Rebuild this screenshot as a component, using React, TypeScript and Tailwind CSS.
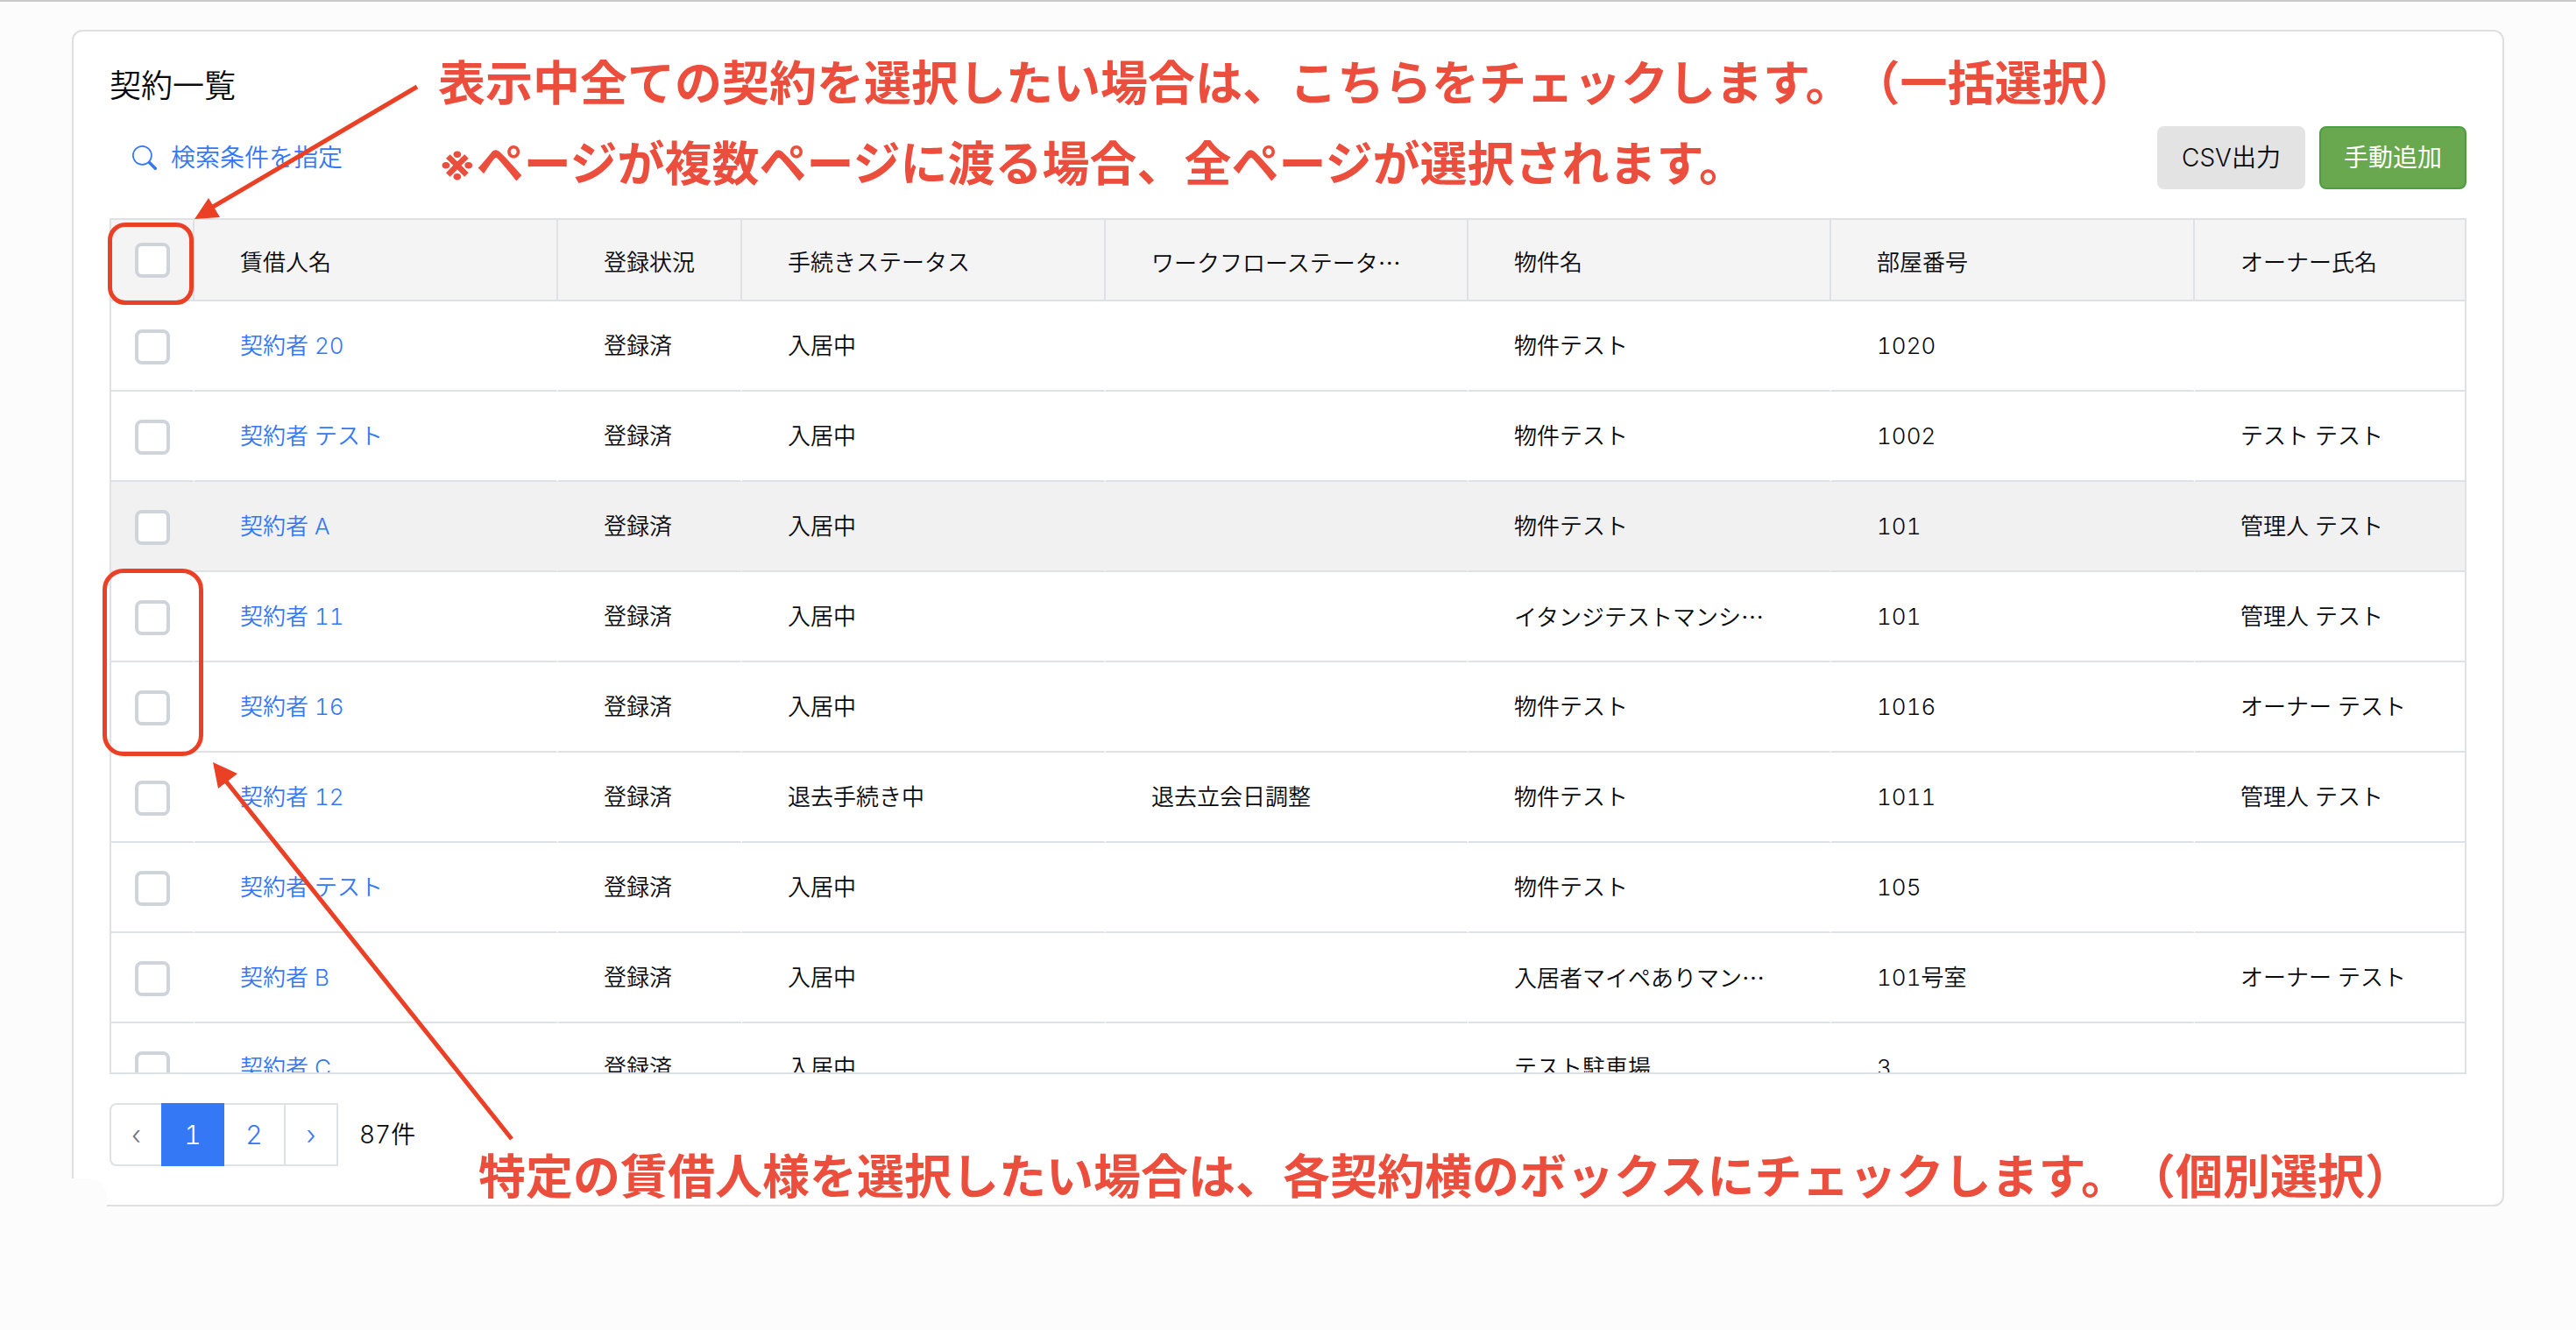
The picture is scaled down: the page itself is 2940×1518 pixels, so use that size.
import { BsSearch } from "react-icons/bs";

type Contract = {
  name: string;
  status: string;
  procedure: string;
  workflow: string;
  property: string;
  room: string;
  owner: string;
  hovered?: boolean;
};

const columns = ["賃借人名", "登録状況", "手続きステータス", "ワークフローステータ…", "物件名", "部屋番号", "オーナー氏名"];

const contracts: Contract[] = [
  { name: "契約者 20", status: "登録済", procedure: "入居中", workflow: "", property: "物件テスト", room: "1020", owner: "" },
  { name: "契約者 テスト", status: "登録済", procedure: "入居中", workflow: "", property: "物件テスト", room: "1002", owner: "テスト テスト" },
  { name: "契約者 A", status: "登録済", procedure: "入居中", workflow: "", property: "物件テスト", room: "101", owner: "管理人 テスト", hovered: true },
  { name: "契約者 11", status: "登録済", procedure: "入居中", workflow: "", property: "イタンジテストマンシ…", room: "101", owner: "管理人 テスト" },
  { name: "契約者 16", status: "登録済", procedure: "入居中", workflow: "", property: "物件テスト", room: "1016", owner: "オーナー テスト" },
  { name: "契約者 12", status: "登録済", procedure: "退去手続き中", workflow: "退去立会日調整", property: "物件テスト", room: "1011", owner: "管理人 テスト" },
  { name: "契約者 テスト", status: "登録済", procedure: "入居中", workflow: "", property: "物件テスト", room: "105", owner: "" },
  { name: "契約者 B", status: "登録済", procedure: "入居中", workflow: "", property: "入居者マイペありマン…", room: "101号室", owner: "オーナー テスト" },
  { name: "契約者 C", status: "登録済", procedure: "入居中", workflow: "", property: "テスト駐車場", room: "3", owner: "" },
];

/** Cell text; a trailing ellipsis is set in the Japanese face so its dots sit mid-line. */
function CellText({ text }: { text: string }) {
  if (!text.endsWith("…")) return <>{text}</>;
  return (
    <>
      {text.slice(0, -1)}
      <span className="font-['Noto_Sans_CJK_JP',sans-serif]">…</span>
    </>
  );
}

function Checkbox({ label }: { label: string }) {
  return (
    <input
      type="checkbox"
      aria-label={label}
      className="block size-10 appearance-none rounded-lg border-4 border-[#ced4da] bg-white checked:bg-[#3478f6]"
    />
  );
}

function ContractTable() {
  return (
    <div className="mt-[33px] h-[977px] overflow-x-hidden overflow-y-auto border-2 border-[#dee2e6] [scrollbar-width:none]">
      <table className="w-full table-fixed border-separate border-spacing-0 text-left text-[26px] leading-10">
        <colgroup>
          <col className="w-[95px]" />
          <col className="w-[415px]" />
          <col className="w-[210px]" />
          <col className="w-[415px]" />
          <col className="w-[414px]" />
          <col className="w-[414px]" />
          <col className="w-[415px]" />
          <col />
        </colgroup>
        <thead>
          <tr className="h-[93px] bg-[#f4f4f4]">
            <th className="border-r-2 border-b-2 border-[#dee2e6] pl-[27px]">
              <Checkbox label="全ての契約を選択" />
            </th>
            {columns.map((c) => (
              <th
                key={c}
                className="overflow-hidden border-r-2 border-b-2 border-[#dee2e6] pt-[6px] pl-[52px] font-[350] whitespace-nowrap last:border-r-0"
              >
                <CellText text={c} />
              </th>
            ))}
          </tr>
        </thead>
        <tbody>
          {contracts.map((c, i) => (
            <tr key={i} className={c.hovered ? "h-[103px] bg-[#f1f1f1]" : "h-[103px]"}>
              <td className="border-r-2 border-b-2 border-r-transparent border-b-[#dee2e6] pt-[3px] pl-[27px]">
                <Checkbox label={c.name + "を選択"} />
              </td>
              {[c.name, c.status, c.procedure, c.workflow, c.property, c.room, c.owner].map((text, j) => (
                <td
                  key={j}
                  className="overflow-hidden border-r-2 border-b-2 border-r-transparent border-b-[#dee2e6] pl-[52px] whitespace-nowrap last:border-r-0"
                >
                  {j === 0 ? (
                    <a href="#contract" className="text-[#3478f6]">
                      {text}
                    </a>
                  ) : (
                    <CellText text={text} />
                  )}
                </td>
              ))}
            </tr>
          ))}
        </tbody>
      </table>
    </div>
  );
}

function Pagination() {
  return (
    <div className="mt-[33px] flex items-center gap-6 text-[28px]">
      <nav aria-label="ページ" className="flex h-[72px] text-[30px]">
        <button className="w-[59px] rounded-l-lg border-2 border-r-0 border-[#dee2e6] text-[#6c757d]">‹</button>
        <button aria-current="page" className="w-[72px] bg-[#3478f6] text-white">1</button>
        <button className="w-[70px] border-2 border-l-0 border-[#dee2e6] text-[#3478f6]">2</button>
        <button className="w-[60px] border-2 border-l-0 border-[#dee2e6] text-[#3478f6]">›</button>
      </nav>
      <span>87件</span>
    </div>
  );
}

/** Guide marks laid over the list. */
function Annotations() {
  return (
    <div className="pointer-events-none absolute inset-0 text-[54px] leading-[80px] font-bold whitespace-nowrap text-[#eb4e3d] [text-spacing-trim:space-all]">
      <p className="absolute top-[54px] left-[500px]">表示中全ての契約を選択したい場合は、こちらをチェックします。（一括選択）</p>
      <p className="absolute top-[146px] left-[500px]">※ページが複数ページに渡る場合、全ページが選択されます。</p>
      <p className="absolute top-[1302px] left-[546px]">特定の賃借人様を選択したい場合は、各契約横のボックスにチェックします。（個別選択）</p>
      <div className="absolute top-[252px] left-[123px] h-[94px] w-[98px] rounded-[20px] border-[5px] border-[#ea4025]" />
      <div className="absolute top-[647px] left-[117px] h-[214px] w-[115px] rounded-[24px] border-[5px] border-[#ea4025]" />
      <svg className="absolute top-0 left-0" width="640" height="1400" fill="none" aria-hidden="true">
        <path d="M476 97L238 237M584 1298L255 886" stroke="#ea4025" strokeWidth="5" />
        <path d="M222 248L238 224L251 246ZM243 868L271 881L249 898Z" fill="#ea4025" />
      </svg>
    </div>
  );
}

export default function App() {
  return (
    <div className="relative min-h-screen border-t-2 border-[#c8c8c8] bg-[#fcfcfc] font-['Inter','Noto_Sans_CJK_JP',sans-serif] font-[350] text-[#080a0c] tabular-nums">
      <main className="relative mx-[82px] mt-8 rounded-xl border-2 border-[#dfdfdf] bg-white px-[41px] pt-[42px] pb-11">
        <h1 className="text-[36px] leading-10">契約一覧</h1>
        <div className="mt-[26px] flex items-center justify-between text-[28px]">
          <button className="flex items-center gap-4 pl-[26px] text-[#3478f6]">
            <BsSearch />
            検索条件を指定
          </button>
          <div className="flex gap-4">
            <button className="h-[72px] rounded-lg bg-[#e3e3e3] px-7">CSV出力</button>
            <button className="h-[72px] rounded-lg border-2 border-[#4b9f40] bg-[#6aa84f] px-[26px] font-normal text-white">手動追加</button>
          </div>
        </div>
        <ContractTable />
        <Pagination />
        <div className="absolute -bottom-0.5 -left-0.5 h-8 w-10 rounded-tr-[20px] bg-[#fcfcfc]" />
      </main>
      <Annotations />
    </div>
  );
}
